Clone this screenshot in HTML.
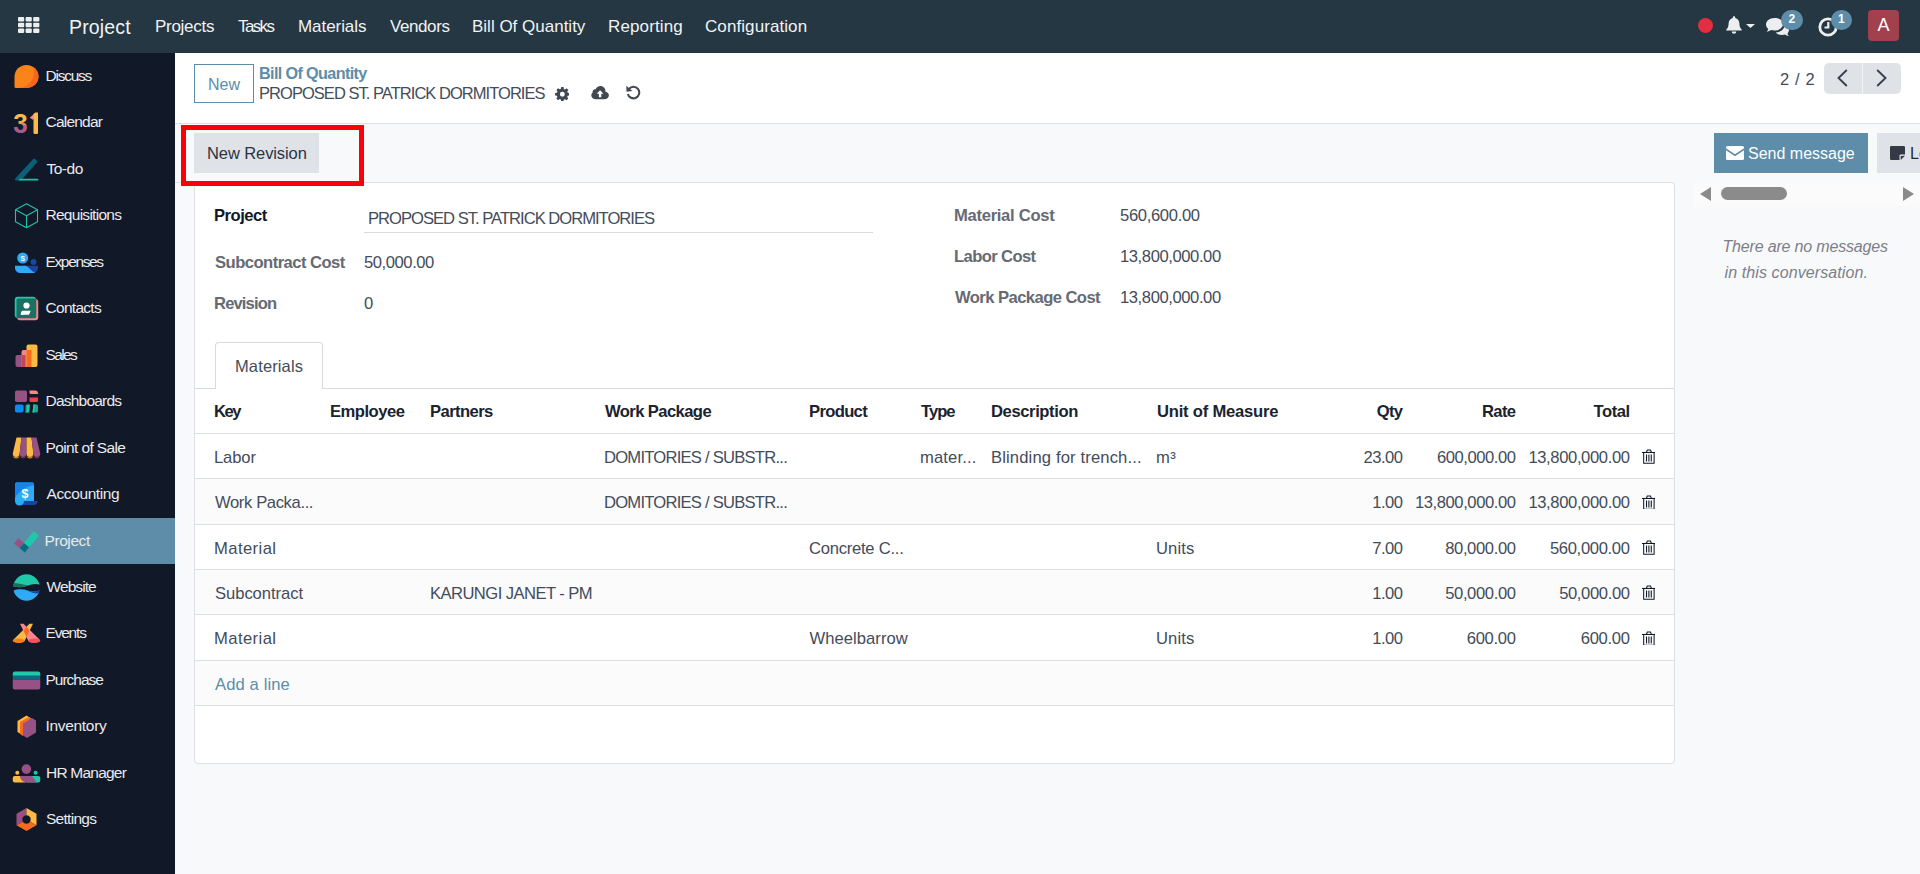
<!DOCTYPE html>
<html lang="en">
<head>
<meta charset="utf-8">
<title>Odoo - Bill Of Quantity</title>
<style>
*{box-sizing:border-box;margin:0;padding:0}
html,body{width:1920px;height:874px;overflow:hidden}
body{font-family:"Liberation Sans",sans-serif;font-size:15.5px;color:#434c5a;background:#f8f9fb;position:relative}
svg{display:block}
.abs{position:absolute}
.t{position:absolute;white-space:nowrap;line-height:20px}
/* NAVBAR */
.navbar{position:absolute;left:0;top:0;width:1920px;height:53px;background:#243742;color:#fff}
.navbar .t{color:#f1f3f4}
.nm{top:17px;font-size:17px}
.badge{width:21.500px;height:19.500px;border-radius:10px;background:#5d8da8;color:#fff;font-size:12px;font-weight:bold;line-height:19.500px;text-align:center}
/* SIDEBAR */
.sidebar{position:absolute;left:0;top:53px;width:175px;height:821px;background:#111827}
.sidebar .item{position:absolute;left:0;width:175px;height:46.45px}
.sidebar .item.active{background:#5d8da8}
.sidebar .item svg{position:absolute;left:14px;top:11px;width:25px;height:25px;overflow:visible}
.sidebar .item span{position:absolute;left:46px;top:13px;line-height:20px;color:#e8eaee;font-size:15.5px;white-space:nowrap}
/* CONTROL PANEL */
.cp{position:absolute;left:175px;top:53px;width:1745px;height:71px;background:#fff;border-bottom:1px solid #dcdfe3}
/* CONTENT */
.statusbar-line{position:absolute;left:175px;top:182px;width:1490px;height:1px;background:#dcdfe3}
.sheet{position:absolute;left:194px;top:182px;width:1481px;height:582px;background:#fff;border:1px solid #dcdfe3;border-radius:0 4px 4px 4px}
table.list{position:absolute;width:1479px;border-collapse:collapse;table-layout:fixed;font-size:16.6px}
table.list th,table.list td{padding:4px 5px 0 5px;text-align:left;white-space:nowrap;overflow:hidden;line-height:20px;vertical-align:middle;border-bottom:1px solid #dcdfe3}
table.list th:first-child,table.list td:first-child{padding-left:20px}
table.list th{font-weight:bold;color:#1b2331;padding-top:3px}
table.list .num{text-align:right}
table.list tbody tr:nth-child(even){background:#fbfbfc}
table.list td.tr{padding:2px 0 0 7px}
table.list span,table.list a{display:inline-block;white-space:nowrap}
.add{color:#5d8da8}
.btn{position:absolute;border-radius:0}
.hl{position:absolute;left:181px;top:125px;width:183px;height:61px;border:5px solid #fd0007}
/*CALIB*/
#brand{letter-spacing:0.167px;margin-left:-1.00px;}
#m1{letter-spacing:-0.286px;margin-left:-1.00px;}
#m2{letter-spacing:-1.625px;margin-left:0.50px;}
#m3{letter-spacing:-0.062px;margin-left:-1.00px;}
#m4{letter-spacing:-0.417px;margin-left:0.50px;}
#m5{letter-spacing:0.000px;margin-left:-1.00px;}
#m6{letter-spacing:0.125px;margin-left:-1.00px;}
#m7{letter-spacing:0.083px;margin-left:0.00px;}
#s0{letter-spacing:-1.250px;margin-left:-0.50px;}
#s1{letter-spacing:-0.786px;margin-left:-0.50px;}
#s2{letter-spacing:-0.500px;margin-left:0.50px;}
#s3{letter-spacing:-0.727px;margin-left:-0.50px;}
#s4{letter-spacing:-1.357px;margin-left:-0.50px;}
#s5{letter-spacing:-0.714px;margin-left:-0.50px;}
#s6{letter-spacing:-1.625px;margin-left:-0.50px;}
#s7{letter-spacing:-0.778px;margin-left:-0.50px;}
#s8{letter-spacing:-0.625px;margin-left:-0.50px;}
#s9{letter-spacing:-0.389px;margin-left:0.50px;}
#s10{letter-spacing:-0.417px;margin-left:-1.50px;}
#s11{letter-spacing:-0.917px;margin-left:0.50px;}
#s12{letter-spacing:-1.200px;margin-left:-0.50px;}
#s13{letter-spacing:-1.000px;margin-left:-0.50px;}
#s14{letter-spacing:-0.312px;margin-left:-0.50px;}
#s15{letter-spacing:-0.778px;margin-left:0.00px;}
#s16{letter-spacing:-0.714px;margin-left:0.00px;}
#newtxt{letter-spacing:0.000px;margin-left:0.50px;}
#bc1{letter-spacing:-0.633px;margin-left:-0.50px;}
#bc2{letter-spacing:-0.960px;margin-left:-0.50px;}
#pager{letter-spacing:0.625px;margin-left:-0.50px;}
#newrevtxt{letter-spacing:-0.091px;margin-left:-1.00px;}
#sendtxt{letter-spacing:0.000px;margin-left:-0.50px;}
#ch1{letter-spacing:-0.175px;margin-left:-1.00px;}
#ch2{letter-spacing:0.100px;margin-left:1.00px;}
#l1{letter-spacing:-0.500px;margin-left:-1.00px;}
#v1{letter-spacing:-1.000px;margin-left:-1.00px;}
#l2{letter-spacing:-0.533px;margin-left:0.00px;}
#v2{letter-spacing:-0.438px;margin-left:0.00px;}
#l3{letter-spacing:-0.857px;margin-left:-1.00px;}
#v3{letter-spacing:0.000px;margin-left:0.00px;}
#l4{letter-spacing:-0.292px;margin-left:-0.50px;}
#v4{letter-spacing:-0.333px;margin-left:-0.50px;}
#l5{letter-spacing:-0.611px;margin-left:-0.50px;}
#v5{letter-spacing:-0.417px;margin-left:-0.50px;}
#l6{letter-spacing:-0.562px;margin-left:0.50px;}
#v6{letter-spacing:-0.417px;margin-left:-0.50px;}
#tabtxt{letter-spacing:0.125px;margin-left:-0.50px;}
#h0{letter-spacing:-1.500px;margin-left:-1.00px;}
#h1{letter-spacing:-0.500px;margin-left:-1.00px;}
#h2{letter-spacing:-0.571px;margin-left:-0.50px;}
#h3{letter-spacing:-0.591px;margin-left:0.50px;}
#h4{letter-spacing:-0.667px;margin-left:-0.50px;}
#h5{letter-spacing:-1.000px;margin-left:0.50px;}
#h6{letter-spacing:-0.400px;margin-left:-1.00px;}
#h7{letter-spacing:-0.214px;margin-left:0.00px;}
#h8{letter-spacing:-0.750px;margin-right:0.75px;}
#h9{letter-spacing:-0.667px;margin-right:0.67px;}
#h10{letter-spacing:-0.500px;margin-right:0.00px;}
#r0c0{letter-spacing:-0.125px;margin-left:-1.00px;}
#r1c0{letter-spacing:-0.375px;margin-left:0.00px;}
#r2c0{letter-spacing:0.429px;margin-left:-1.00px;}
#r3c0{letter-spacing:-0.050px;margin-left:0.00px;}
#r4c0{letter-spacing:0.429px;margin-left:-1.00px;}
#r0c3{letter-spacing:-0.762px;margin-left:-0.50px;}
#r1c3{letter-spacing:-0.762px;margin-left:-0.50px;}
#r0c5{letter-spacing:0.143px;margin-left:-0.50px;}
#r0c6{letter-spacing:0.143px;margin-left:-1.00px;}
#r0c7{letter-spacing:0.500px;margin-left:-1.00px;}
#r2c7{letter-spacing:0.125px;margin-left:-1.00px;}
#r4c7{letter-spacing:0.125px;margin-left:-1.00px;}
#r2c4{letter-spacing:-0.250px;margin-left:-0.50px;}
#r4c4{letter-spacing:0.050px;margin-left:-0.00px;}
#r3c2{letter-spacing:-0.559px;margin-left:-0.50px;}
#r0c8{letter-spacing:-0.500px;margin-right:0.50px;}
#r1c8{letter-spacing:-0.500px;margin-right:0.50px;}
#r2c8{letter-spacing:-0.500px;margin-right:0.50px;}
#r3c8{letter-spacing:-0.500px;margin-right:0.50px;}
#r4c8{letter-spacing:-0.500px;margin-right:0.50px;}
#r0c9{letter-spacing:-0.444px;margin-right:0.44px;}
#r1c9{letter-spacing:-0.417px;margin-right:0.42px;}
#r2c9{letter-spacing:-0.375px;margin-right:0.38px;}
#r3c9{letter-spacing:-0.375px;margin-right:0.38px;}
#r4c9{letter-spacing:-0.300px;margin-right:0.30px;}
#r0c10{letter-spacing:-0.375px;margin-right:-0.13px;}
#r1c10{letter-spacing:-0.375px;margin-right:-0.13px;}
#r2c10{letter-spacing:-0.333px;margin-right:-0.17px;}
#r3c10{letter-spacing:-0.375px;margin-right:-0.12px;}
#r4c10{letter-spacing:-0.300px;margin-right:-0.20px;}
#addline{letter-spacing:0.111px;margin-left:0.00px;}
/*ENDCALIB*/
</style>
</head>
<body>
<nav class="navbar" id="navbar">
<svg class="abs" id="apps" style="left:18px;top:17px" width="22" height="16" viewBox="0 0 22 16"><g fill="#eceef0"><rect x="0" y="0" width="6.2" height="4.4" rx="1"/><rect x="7.6" y="0" width="6.2" height="4.4" rx="1"/><rect x="15.2" y="0" width="6.2" height="4.4" rx="1"/><rect x="0" y="5.8" width="6.2" height="4.4" rx="1"/><rect x="7.6" y="5.8" width="6.2" height="4.4" rx="1"/><rect x="15.2" y="5.8" width="6.2" height="4.4" rx="1"/><rect x="0" y="11.6" width="6.2" height="4.4" rx="1"/><rect x="7.6" y="11.6" width="6.2" height="4.4" rx="1"/><rect x="15.2" y="11.6" width="6.2" height="4.4" rx="1"/></g></svg>
<span class="t" id="brand" style="left:70px;top:17px;font-size:19.5px">Project</span>
<span class="t nm" id="m1" style="left:156px">Projects</span>
<span class="t nm" id="m2" style="left:237.5px">Tasks</span>
<span class="t nm" id="m3" style="left:299px">Materials</span>
<span class="t nm" id="m4" style="left:389.5px">Vendors</span>
<span class="t nm" id="m5" style="left:473px">Bill Of Quantity</span>
<span class="t nm" id="m6" style="left:609px">Reporting</span>
<span class="t nm" id="m7" style="left:705px">Configuration</span>
<div class="abs" id="reddot" style="left:1698px;top:17.5px;width:15px;height:15px;border-radius:50%;background:#e32d40"></div>
<svg class="abs" id="bell" style="left:1725px;top:16px" width="18" height="18" viewBox="0 0 18 18"><path fill="#eceef0" d="M9 0.2c.7 0 1.2.5 1.2 1.2v.5c2.5.6 4.2 2.8 4.2 5.5 0 2.900.8 4.700 2.300 6.100v1.100H1.300v-1.100c1.500-1.400 2.300-3.200 2.300-6.100 0-2.700 1.700-4.900 4.200-5.500v-.5C7.800.7 8.300.2 9 .2zM6.800 15.400h4.400c0 1.300-1 2.300-2.200 2.300s-2.200-1-2.200-2.300z"/></svg>
<svg class="abs" id="caret" style="left:1746px;top:24px" width="9" height="4" viewBox="0 0 9 4"><path fill="#eceef0" d="M0 0h9L4.500 4z"/></svg>
<svg class="abs" id="chat" style="left:1766px;top:18px" width="23" height="18" viewBox="0 0 23 18"><path fill="#eceef0" d="M8.500 0C3.800 0 0 2.900 0 6.500c0 1.700.9 3.300 2.300 4.400-.3 1-.9 1.900-1.700 2.700 1.700-.1 3.300-.700 4.600-1.600 1 .3 2.100.5 3.300.5 4.700 0 8.500-2.900 8.500-6.500S13.200 0 8.500 0z"/><path fill="#eceef0" d="M18.600 7.300c0 3.900-4 7-9 7.200 1.400 1.500 3.700 2.500 6.400 2.500 1 0 2-.2 2.900-.5 1.100.8 2.500 1.300 4 1.400-.700-.7-1.200-1.500-1.500-2.400 1-.9 1.600-2.100 1.600-3.400 0-2-1.700-3.800-4.400-4.800z"/></svg>
<div class="abs badge" id="b2" style="left:1781px;top:10px">2</div>
<svg class="abs" id="clock" style="left:1817.5px;top:16.500px" width="20" height="20" viewBox="0 0 20 20"><circle cx="10" cy="10" r="8.200" fill="none" stroke="#eceef0" stroke-width="2.800"/><path d="M10.300 5v5.500H6.500" fill="none" stroke="#eceef0" stroke-width="2.200"/></svg>
<div class="abs badge" id="b1" style="left:1830.5px;top:10px">1</div>
<div class="abs" id="avatar" style="left:1868px;top:10px;width:31px;height:31px;border-radius:4px;background:#a3404e;color:#fff;font-size:18px;line-height:31px;text-align:center">A</div>
</nav>
<aside class="sidebar" id="sidebar">
<a class="item" style="top:0.0px"><svg viewBox="0 0 50 50"><path d="M1 25C1 12.300 11.800 2 25 2s24 10.300 24 23-10.800 23-24 23H4a3 3 0 0 1-3-3z" fill="#f8841a"/><path d="M38 5.500C44.500 9.800 49 17 49 25c0 12.700-10.800 23-24 23H9C30 47 45 30 38 5.500z" fill="#f7651f"/></svg><span id="s0">Discuss</span></a>
<a class="item" style="top:46.45px"><svg viewBox="0 0 50 50"><defs><linearGradient id="g3" x1="0" y1="0" x2="0" y2="1"><stop offset="0" stop-color="#fbb945"/><stop offset=".42" stop-color="#fbb945"/><stop offset=".6" stop-color="#b3608c"/><stop offset="1" stop-color="#985184"/></linearGradient></defs><text x="-1.500" y="46" font-family="Liberation Sans" font-weight="bold" font-size="56" fill="url(#g3)" textLength="29" lengthAdjust="spacingAndGlyphs">3</text><path d="M31.500 15.500L43 5l4.500 5-10 9.500z" fill="#f4858e"/><path d="M39 8l4-3h5v40.500a2.500 2.500 0 0 1-2.500 2.500h-4a2.500 2.500 0 0 1-2.500-2.500z" fill="#fbb945"/></svg><span id="s1">Calendar</span></a>
<a class="item" style="top:92.9px"><svg viewBox="0 0 50 50"><path d="M2 43.500L38 4.500a3 3 0 0 1 4.500 0l3 3a3 3 0 0 1 0 4L14 47H4a2.500 2.500 0 0 1-2-3.500z" fill="#0c5f77"/><path d="M12 43.500h35a1.800 1.800 0 0 1 0 3.600H9z" fill="#1fc0a4"/></svg><span id="s2">To-do</span></a>
<a class="item" style="top:139.35px"><svg viewBox="0 0 50 50"><g fill="none" stroke="#20c4a6" stroke-width="2.200" stroke-linejoin="round"><path d="M25 1.500l22 12v24l-22 12-22-12v-24z"/><path d="M3 13.500l22 12 22-12M25 25.500v24"/></g></svg><span id="s3">Requisitions</span></a>
<a class="item" style="top:185.8px"><svg viewBox="0 0 50 50"><circle cx="39" cy="24" r="6" fill="#1a44a0"/><path d="M20 31.500h28v4a10.500 10.500 0 0 1-10.500 10.500H20z" fill="#1a44a0"/><circle cx="17.400" cy="16" r="11" fill="#2eaaf7"/><path d="M2 31.500h20c7 0 10 10 20 13.500-1.500.7-3 1-4.500 1h-25A10.500 10.500 0 0 1 2 35.500z" fill="#2eaaf7"/><text x="17.400" y="21" font-family="Liberation Sans" font-weight="bold" font-size="13.500" fill="#fff" text-anchor="middle">S</text></svg><span id="s4">Expenses</span></a>
<a class="item" style="top:232.25px"><svg viewBox="0 0 50 50"><rect x="6" y="6" width="42.500" height="42.500" rx="6" fill="#f4858e"/><rect x="1.500" y="1.500" width="42.500" height="42.500" rx="6" fill="#1fc8a9"/><rect x="5" y="5" width="39.500" height="39.500" rx="3.500" fill="#1d6f63"/><circle cx="25" cy="19" r="6.200" fill="#fff"/><path d="M17 29.500h16.500l-3.500 8H13.500z" fill="#fff"/><path d="M17 29.500c-2.500 0-3.500 5-3.500 8h6z" fill="#fff"/></svg><span id="s5">Contacts</span></a>
<a class="item" style="top:278.7px"><svg viewBox="0 0 50 50"><path d="M3 28a4 4 0 0 1 4-4h10v24H7a4 4 0 0 1-4-4z" fill="#985184"/><path d="M15 18a4 4 0 0 1 4-4h10v34H15z" fill="#f4858e"/><path d="M15 24h8v24h-8z" fill="#c2455e"/><path d="M25 7a4 4 0 0 1 4-4h14a4 4 0 0 1 4 4v37a4 4 0 0 1-4 4H25z" fill="#fbb945"/><path d="M25 14h10v34H25z" fill="#f76b1c"/></svg><span id="s6">Sales</span></a>
<a class="item" style="top:325.15px"><svg viewBox="0 0 50 50"><rect x="2" y="3" width="24" height="23" rx="3.500" fill="#985184"/><path d="M31 3h11a6 6 0 0 1 6 6v1H34a3 3 0 0 1-3-3z" fill="#fc868b"/><path d="M31 17h17v6a3 3 0 0 1-3 3H34a3 3 0 0 1-3-3z" fill="#e8424a"/><rect x="2" y="31" width="17" height="16" rx="3.500" fill="#0b8bf5"/><path d="M26 31h6l-1.500 16H23z" fill="#1fc8a9"/><path d="M26 31a3 3 0 0 0-3 3v13h3z" fill="#17a78e"/><path d="M39 31h6a3 3 0 0 1 3 3v10a3 3 0 0 1-3 3h-8z" fill="#17a78e"/><path d="M39 31h3l-1.500 16H37z" fill="#1fc8a9"/></svg><span id="s7">Dashboards</span></a>
<a class="item" style="top:371.6px"><svg viewBox="0 0 50 50"><path d="M5 3h10L11.25 35a6.875 6.875 0 0 1-13.75 0z" fill="#fbb945"/><path d="M-2.5 35.500a6.875 6.875 0 0 0 13.75 0c0 3-3 4.500-6.875 4.500s-6.875-1.500-6.875-4.500z" fill="#f97f12" transform="translate(0 2.500)"/><path d="M15 3h10L25.0 35a6.875 6.875 0 0 1-13.75 0z" fill="#985184"/><path d="M11.25 35.500a6.875 6.875 0 0 0 13.75 0c0 3-3 4.500-6.875 4.500s-6.875-1.500-6.875-4.500z" fill="#6d2f5c" transform="translate(0 2.500)"/><path d="M25 3h10L38.75 35a6.875 6.875 0 0 1-13.75 0z" fill="#fbb945"/><path d="M25.0 35.500a6.875 6.875 0 0 0 13.75 0c0 3-3 4.500-6.875 4.500s-6.875-1.500-6.875-4.500z" fill="#f97f12" transform="translate(0 2.500)"/><path d="M35 3h10L52.5 35a6.875 6.875 0 0 1-13.75 0z" fill="#985184"/><path d="M38.75 35.500a6.875 6.875 0 0 0 13.75 0c0 3-3 4.500-6.875 4.500s-6.875-1.500-6.875-4.500z" fill="#6d2f5c" transform="translate(0 2.500)"/></svg><span id="s8">Point of Sale</span></a>
<a class="item" style="top:418.05px"><svg viewBox="0 0 50 50"><path d="M18 38h30l-2 4a8 8 0 0 1-6 4H14z" fill="#1a44a0"/><path d="M2 4a3 3 0 0 1 3-3h32a3 3 0 0 1 3 3v34H20c0 5-3.500 9-9 9s-9-4-9-9z" fill="#2eaaf7"/><path d="M2 4a3 3 0 0 1 3-3h32a3 3 0 0 1 3 3v3C22 9 8 20 2 32z" fill="#1583e9"/><text x="22" y="32.500" font-family="Liberation Sans" font-weight="bold" font-size="25" fill="#fff" text-anchor="middle">$</text></svg><span id="s9">Accounting</span></a>
<a class="item active" style="top:464.5px"><svg viewBox="0 0 50 50"><g transform="translate(21.600 46.800) rotate(-50)"><rect x="0" y="-28" width="13.500" height="28" fill="#985184"/><rect x="0" y="-13.500" width="44" height="13.500" fill="#1fc8a9" rx="1"/><rect x="0" y="-13.500" width="13.500" height="13.500" fill="#0b6a82"/></g></svg><span id="s10">Project</span></a>
<a class="item" style="top:510.95px"><svg viewBox="0 0 50 50"><defs><clipPath id="gc"><circle cx="25" cy="25" r="26.500"/></clipPath></defs><g clip-path="url(#gc)"><path d="M-3 -3h56v23c-9-3-17-2-25 1-9 3.500-19 5-31 1z" fill="#1fc8a9"/><path d="M-3 16c10 0 17 2 31 5-9 3.500-19 5-31 1z" fill="#1d6f63"/><path d="M-3 32c11-4.500 21-4 30-1 8 2.500 16 3 26-1v24H-3z" fill="#2eaaf7"/><path d="M27 31c8 2.500 16 3 26-1v6c-9 2-17 0-26-5z" fill="#1a44a0"/></g></svg><span id="s11">Website</span></a>
<a class="item" style="top:557.4px"><svg viewBox="0 0 50 50"><path d="M31 5.500h7l-16 33c-1 3-6 5-12 5s-12-2-12.500-5z" fill="#fbb945"/><ellipse cx="9.500" cy="39.500" rx="12" ry="4.500" fill="#f97f12"/><path d="M19 5.500h-7l16 33c1 3 6 5 12 5s12-2 12.500-5z" fill="#fc868b"/><ellipse cx="40.500" cy="39.500" rx="12" ry="4.500" fill="#f4525b"/><path d="M25 11.500l5.500 8.500-5.500 11.500-5.500-11.500z" fill="#f76b1c"/></svg><span id="s12">Events</span></a>
<a class="item" style="top:603.85px"><svg viewBox="0 0 50 50"><path d="M-2.500 11a4 4 0 0 1 4-4h47a4 4 0 0 1 4 4v5h-55z" fill="#1fc8a9"/><path d="M-2.500 15h55v5a3.500 3.500 0 0 1-3.500 3.500H1a3.500 3.500 0 0 1-3.500-3.500z" fill="#0b6a82"/><path d="M-2.500 20c0 2 1.500 3.500 3.500 3.500h48c2 0 3.500-1.500 3.500-3.500v19.500a3.500 3.500 0 0 1-3.500 3.500H1a3.500 3.500 0 0 1-3.500-3.500z" fill="#985184"/></svg><span id="s13">Purchase</span></a>
<a class="item" style="top:650.3px"><svg viewBox="0 0 50 50"><path d="M7 14L25 3l8 5L15 19v22l-8-5z" fill="#fbb945"/><path d="M12 16L30 6l6 4-18 11v23l-6-4z" fill="#f76b1c"/><path d="M18 19L36 8l8 5v24L26 48l-8-5z" fill="#985184"/></svg><span id="s14">Inventory</span></a>
<a class="item" style="top:696.75px"><svg viewBox="0 0 50 50"><circle cx="6.600" cy="23.600" r="4" fill="#fbb945"/><circle cx="43.200" cy="23.600" r="4" fill="#1fc8a9"/><circle cx="24.800" cy="16.200" r="9.600" fill="#985184"/><path d="M-2.500 34a4 4 0 0 1 4-4h22v13h-22a4 4 0 0 1-4-4z" fill="#fbb945"/><path d="M26 30h22.500a4 4 0 0 1 4 4v5a4 4 0 0 1-4 4H26z" fill="#1fc8a9"/><path d="M12 30h22c6 0 6 10 13 13H26c-8 0-14-6-14-13z" fill="#985184"/></svg><span id="s15">HR Manager</span></a>
<a class="item" style="top:743.2px"><svg viewBox="0 0 50 50"><path fill-rule="evenodd" d="M25 2v14.400A8.600 8.600 0 0 0 17.550 29.300L5 36.500v-23z" fill="#985184"/><path d="M25 2l20 11.500v23l-12.550-7.200A8.600 8.600 0 0 0 25 16.400z" fill="#fbb945"/><path d="M5 36.500l12.550-7.200a8.600 8.600 0 0 0 14.900 0L45 36.500 25 48z" fill="#f76b1c"/></svg><span id="s16">Settings</span></a>
</aside>
<header class="cp" id="cp">
<div class="abs" id="newbtn" style="left:19px;top:11px;width:60px;height:39px;border:1px solid #5d8da8;border-radius:0;background:#fff"></div>
<span class="t" id="newtxt" style="left:32.500px;top:22px;color:#5d8da8;font-size:16px">New</span>
<span class="t" id="bc1" style="left:84.500px;top:10.25px;color:#5d8da8;font-weight:bold;font-size:16.2px">Bill Of Quantity</span>
<span class="t" id="bc2" style="left:84.500px;top:30px;color:#434c5a;font-size:16.500px">PROPOSED ST. PATRICK DORMITORIES</span>
<svg class="abs" id="gear" style="left:379.700px;top:33.600px" width="14.700" height="14.500" viewBox="0 0 16 16"><path fill="#414852" fill-rule="evenodd" d="M6.700 0h2.600l.4 2.100 1.300.55 1.800-1.200 1.850 1.850-1.200 1.800.55 1.300L16 6.700v2.600l-2.100.4-.55 1.300 1.200 1.800-1.850 1.850-1.800-1.200-1.300.55L9.300 16H6.700l-.4-2.100-1.300-.55-1.800 1.200-1.850-1.850 1.200-1.800-.55-1.300L0 9.300V6.700l2.100-.4.55-1.300-1.200-1.800L3.300 1.350l1.800 1.200 1.300-.55zM8 5.300a2.700 2.700 0 1 0 0 5.400 2.700 2.700 0 0 0 0-5.400z"/></svg>
<svg class="abs" id="cloud" style="left:415.900px;top:32.800px" width="18.200" height="13.900" viewBox="0 0 19 15"><path fill="#414852" fill-rule="evenodd" d="M15.300 6.200c0-.2.050-.4.050-.6C15.350 2.500 12.900 0 9.800 0 7.500 0 5.500 1.400 4.700 3.500 4.500 3.450 4.300 3.400 4.100 3.400c-1.500 0-2.700 1.200-2.700 2.700 0 .3.050.6.150.9C.600 7.600 0 8.800 0 10.100c0 2.300 1.900 4.200 4.200 4.200h10.500c2.400 0 4.300-1.900 4.300-4.200 0-1.900-1.400-3.500-3.700-3.900zM13.100 8.500h-2.300v3.700H8.200V8.500H5.900l3.600-3.900z"/></svg>
<svg class="abs" id="undo" style="left:450.900px;top:32.300px" width="14.900" height="15" viewBox="0 0 16 16"><path fill="none" stroke="#414852" stroke-width="2.200" d="M3.200 4.200A6.200 6.200 0 1 1 2 9.500"/><path fill="#414852" d="M0.300 0.800l.3 6.400 6.300-.9z"/></svg>
<span class="t" id="pager" style="left:1605.500px;top:15.500px;font-size:16.500px;color:#434c5a">2 / 2</span>
<div class="abs" id="pgbtns" style="left:1649px;top:10px;width:77px;height:31px;background:#dfe2e7;border-radius:5px"></div>
<div class="abs" style="left:1687px;top:10px;width:1px;height:31px;background:#f3f4f6"></div>
<svg class="abs" id="chevl" style="left:1662px;top:15.500px" width="11" height="18" viewBox="0 0 11 18"><path fill="none" stroke="#3a414c" stroke-width="1.900" d="M9.800 1L1.500 9l8.300 8"/></svg>
<svg class="abs" id="chevr" style="left:1701px;top:15.500px" width="11" height="18" viewBox="0 0 11 18"><path fill="none" stroke="#3a414c" stroke-width="1.900" d="M1.200 1l8.300 8-8.300 8"/></svg>
</header>
<main id="main">
<div class="statusbar-line"></div>
<div class="btn" id="newrev" style="left:194px;top:133px;width:125px;height:40px;background:#dfe2e7"></div>
<span class="t" id="newrevtxt" style="left:208px;top:142.500px;font-size:16.5px;color:#2b3442">New Revision</span>
<div class="btn" id="sendmsg" style="left:1714px;top:133px;width:154px;height:40px;background:#5d8da8;border-radius:0"></div>
<svg class="abs" id="env" style="left:1726px;top:146px" width="18" height="14" viewBox="0 0 18 14"><path fill="#fff" d="M0 1.500A1.500 1.500 0 0 1 1.500 0h15A1.500 1.500 0 0 1 18 1.500v.800L9 8.300 0 2.300zM0 4.300l9 6 9-6v8.200a1.500 1.500 0 0 1-1.500 1.500h-15A1.500 1.500 0 0 1 0 12.500z"/></svg>
<span class="t" id="sendtxt" style="left:1748.500px;top:144px;font-size:16px;color:#fff">Send message</span>
<div class="btn" id="lognote" style="left:1877px;top:133px;width:60px;height:40px;background:#dfe2e7;border-radius:0"></div>
<svg class="abs" id="note" style="left:1890px;top:146px" width="15" height="14" viewBox="0 0 15 14"><path fill="#343a45" d="M1.200 0h12.600A1.200 1.200 0 0 1 15 1.200v7.300h-4.300a1.200 1.200 0 0 0-1.200 1.200V14H1.200A1.200 1.200 0 0 1 0 12.800V1.200A1.200 1.200 0 0 1 1.200 0zM15 9.700L10.700 14V9.900z"/></svg>
<span class="t" id="logtxt" style="left:1910px;top:144px;font-size:16px;color:#1f2937">Log note</span>
<section class="sheet" id="sheet"><div class="abs" style="left:0;top:-1px;width:0;height:0" id="sheetorigin">
<span class="t" id="l1" style="left:20px;top:23.75px;font-size:16.6px;font-weight:bold;color:#111827">Project</span>
<span class="t" id="v1" style="left:174px;top:27.25px;font-size:16.6px;">PROPOSED ST. PATRICK DORMITORIES</span>
<div class="abs" style="left:169px;top:50px;width:509px;height:1px;background:#d8dadd"></div>
<span class="t" id="l2" style="left:20px;top:70.75px;font-size:16.6px;font-weight:bold;color:#666a73">Subcontract Cost</span>
<span class="t" id="v2" style="left:169px;top:70.75px;font-size:16.6px;">50,000.00</span>
<span class="t" id="l3" style="left:20px;top:111.75px;font-size:16.6px;font-weight:bold;color:#666a73">Revision</span>
<span class="t" id="v3" style="left:169px;top:111.75px;font-size:16.6px;">0</span>
<span class="t" id="l4" style="left:759.5px;top:23.75px;font-size:16.6px;font-weight:bold;color:#666a73">Material Cost</span>
<span class="t" id="v4" style="left:925.5px;top:23.75px;font-size:16.6px;">560,600.00</span>
<span class="t" id="l5" style="left:759.5px;top:64.75px;font-size:16.6px;font-weight:bold;color:#666a73">Labor Cost</span>
<span class="t" id="v5" style="left:925.5px;top:64.75px;font-size:16.6px;">13,800,000.00</span>
<span class="t" id="l6" style="left:759.5px;top:105.75px;font-size:16.6px;font-weight:bold;color:#666a73">Work Package Cost</span>
<span class="t" id="v6" style="left:925.5px;top:105.75px;font-size:16.6px;">13,800,000.00</span>
<div class="abs" style="left:0;top:206px;width:1479px;height:1px;background:#d8dadd"></div>
<div class="abs" id="tab" style="left:20px;top:160px;width:108px;height:47px;border:1px solid #d8dadd;border-bottom:none;border-radius:4px 4px 0 0;background:#fff"></div>
<span class="t" id="tabtxt" style="left:40.5px;top:174.28px;font-size:16.5px;">Materials</span>
<table class="list" id="list" style="left:0;top:206px"><colgroup><col style="width:131px"><col style="width:99.5px"><col style="width:174px"><col style="width:205px"><col style="width:111px"><col style="width:71.5px"><col style="width:165px"><col style="width:138px"><col style="width:118px"><col style="width:113px"><col style="width:113.5px"><col style="width:39.5px"></colgroup>
<thead><tr style="height:45px"><th class=""><span id="h0">Key</span></th><th class=""><span id="h1">Employee</span></th><th class=""><span id="h2">Partners</span></th><th class=""><span id="h3">Work Package</span></th><th class=""><span id="h4">Product</span></th><th class=""><span id="h5">Type</span></th><th class=""><span id="h6">Description</span></th><th class=""><span id="h7">Unit of Measure</span></th><th class="num"><span id="h8">Qty</span></th><th class="num"><span id="h9">Rate</span></th><th class="num"><span id="h10">Total</span></th><th class=""><span id="h11"></span></th></tr></thead><tbody>
<tr style="height:45px"><td class=""><span id="r0c0">Labor</span></td><td></td><td></td><td class=""><span id="r0c3">DOMITORIES / SUBSTR...</span></td><td></td><td class=""><span id="r0c5">mater...</span></td><td class=""><span id="r0c6">Blinding for trench...</span></td><td class=""><span id="r0c7">m³</span></td><td class="num"><span id="r0c8">23.00</span></td><td class="num"><span id="r0c9">600,000.00</span></td><td class="num"><span id="r0c10">13,800,000.00</span></td><td class="tr"><svg class="trash" width="13.8" height="14.8" viewBox="0 0 14 15"><g fill="none" stroke="#111827" stroke-width="1.05"><path d="M4.500 3.300L5.400 1.100h3.200l.9 2.200"/><path d="M0 3.500h14"/><path d="M1.700 4v10.400h10.600V4"/><path d="M4.600 5.600v7M7 5.600v7M9.400 5.600v7" stroke-width="1.100"/></g></svg></td></tr>
<tr style="height:46px"><td class=""><span id="r1c0">Work Packa...</span></td><td></td><td></td><td class=""><span id="r1c3">DOMITORIES / SUBSTR...</span></td><td></td><td></td><td></td><td></td><td class="num"><span id="r1c8">1.00</span></td><td class="num"><span id="r1c9">13,800,000.00</span></td><td class="num"><span id="r1c10">13,800,000.00</span></td><td class="tr"><svg class="trash" width="13.8" height="14.8" viewBox="0 0 14 15"><g fill="none" stroke="#111827" stroke-width="1.05"><path d="M4.500 3.300L5.400 1.100h3.200l.9 2.200"/><path d="M0 3.500h14"/><path d="M1.700 4v10.400h10.600V4"/><path d="M4.600 5.600v7M7 5.600v7M9.400 5.600v7" stroke-width="1.100"/></g></svg></td></tr>
<tr style="height:45px"><td class=""><span id="r2c0">Material</span></td><td></td><td></td><td></td><td class=""><span id="r2c4">Concrete C...</span></td><td></td><td></td><td class=""><span id="r2c7">Units</span></td><td class="num"><span id="r2c8">7.00</span></td><td class="num"><span id="r2c9">80,000.00</span></td><td class="num"><span id="r2c10">560,000.00</span></td><td class="tr"><svg class="trash" width="13.8" height="14.8" viewBox="0 0 14 15"><g fill="none" stroke="#111827" stroke-width="1.05"><path d="M4.500 3.300L5.400 1.100h3.200l.9 2.200"/><path d="M0 3.500h14"/><path d="M1.700 4v10.400h10.600V4"/><path d="M4.600 5.600v7M7 5.600v7M9.400 5.600v7" stroke-width="1.100"/></g></svg></td></tr>
<tr style="height:45px"><td class=""><span id="r3c0">Subcontract</span></td><td></td><td class=""><span id="r3c2">KARUNGI JANET - PM</span></td><td></td><td></td><td></td><td></td><td></td><td class="num"><span id="r3c8">1.00</span></td><td class="num"><span id="r3c9">50,000.00</span></td><td class="num"><span id="r3c10">50,000.00</span></td><td class="tr"><svg class="trash" width="13.8" height="14.8" viewBox="0 0 14 15"><g fill="none" stroke="#111827" stroke-width="1.05"><path d="M4.500 3.300L5.400 1.100h3.200l.9 2.200"/><path d="M0 3.500h14"/><path d="M1.700 4v10.400h10.600V4"/><path d="M4.600 5.600v7M7 5.600v7M9.400 5.600v7" stroke-width="1.100"/></g></svg></td></tr>
<tr style="height:46px"><td class=""><span id="r4c0">Material</span></td><td></td><td></td><td></td><td class=""><span id="r4c4">Wheelbarrow</span></td><td></td><td></td><td class=""><span id="r4c7">Units</span></td><td class="num"><span id="r4c8">1.00</span></td><td class="num"><span id="r4c9">600.00</span></td><td class="num"><span id="r4c10">600.00</span></td><td class="tr"><svg class="trash" width="13.8" height="14.8" viewBox="0 0 14 15"><g fill="none" stroke="#111827" stroke-width="1.05"><path d="M4.500 3.300L5.400 1.100h3.200l.9 2.200"/><path d="M0 3.500h14"/><path d="M1.700 4v10.400h10.600V4"/><path d="M4.600 5.600v7M7 5.600v7M9.400 5.600v7" stroke-width="1.100"/></g></svg></td></tr>
<tr style="height:45px"><td colspan="12"><a id="addline" class="add">Add a line</a></td></tr>
</tbody></table>
</div></section>
<aside id="chatter">
<div class="abs" style="left:1694px;top:183px;width:226px;height:22px;background:#fbfbfb"></div>
<svg class="abs" style="left:1700px;top:187px" width="11" height="14" viewBox="0 0 11 14"><path fill="#8b8b8b" d="M11 0v14L0 7z"/></svg>
<div class="abs" style="left:1721px;top:187px;width:66px;height:13px;border-radius:6.500px;background:#8b8b8b"></div>
<svg class="abs" style="left:1903px;top:187px" width="11" height="14" viewBox="0 0 11 14"><path fill="#8b8b8b" d="M0 0v14l11-7z"/></svg>
<span class="t" id="ch1" style="left:1723.500px;top:237px;font-style:italic;color:#7c7f89;font-size:16px">There are no messages</span>
<span class="t" id="ch2" style="left:1723.500px;top:263px;font-style:italic;color:#7c7f89;font-size:16px">in this conversation.</span>
</aside>
</main>
<div class="hl"></div>
</body>
</html>
